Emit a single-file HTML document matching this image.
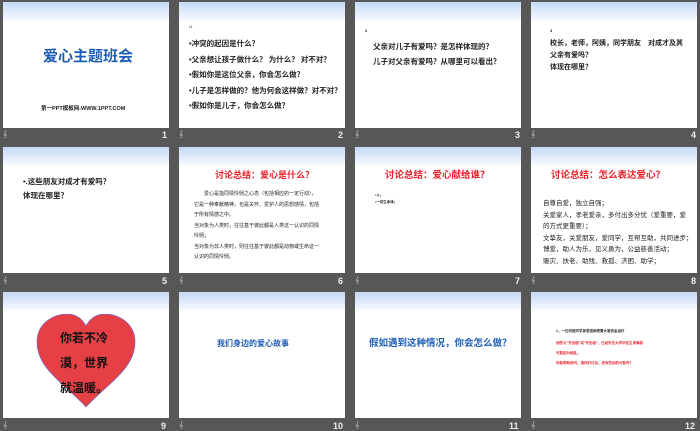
<!DOCTYPE html>
<html><head><meta charset="utf-8"><style>
*{margin:0;padding:0;box-sizing:border-box}
body{width:700px;height:431px;background:#575757;position:relative;overflow:hidden;font-family:"Liberation Sans","Noto Sans CJK SC",sans-serif}
.s{position:absolute;width:166px;height:126px;background:#fff;overflow:hidden}
.s:before{content:"";position:absolute;left:0;top:0;right:0;height:18px;background:linear-gradient(#c5daf5,#f6f9fe)}
.n{position:absolute;color:#eee;font-size:9px;font-weight:bold}
.i{position:absolute;color:#ccc;font-size:7px}
.t{position:absolute;white-space:nowrap;font-weight:bold;color:#222}
.r{color:#e8202a}
.b{color:#1d5db5}
</style></head><body>
<div class="s" style="left:3px;top:2px">
 <div class="t b" style="left:40px;top:43px;font-size:15px">爱心主题班会</div>
 <div class="t" style="left:38px;top:102px;font-size:5.5px">第一PPT模板网-WWW.1PPT.COM</div>
</div>
<div class="s" style="left:179px;top:2px">
 <div class="t" style="left:10px;top:22px;font-size:4px;font-weight:normal">•1</div>
 <div class="t" style="left:10px;top:34px;font-size:7.5px;line-height:15.5px">•冲突的起因是什么？<br>•父亲想让孩子做什么？ 为什么？ 对不对？<br>•假如你是这位父亲，你会怎么做？<br>•儿子是怎样做的？他为何会这样做？对不对？<br>•假如你是儿子，你会怎么做？</div>
</div>
<div class="s" style="left:355px;top:2px">
 <div class="t" style="left:10px;top:26px;font-size:4px">2</div>
 <div class="t" style="left:18px;top:37px;font-size:7.5px;line-height:15px">父亲对儿子有爱吗？是怎样体现的？<br>儿子对父亲有爱吗？从哪里可以看出？</div>
</div>
<div class="s" style="left:531px;top:2px">
 <div class="t" style="left:19px;top:26px;font-size:4px">3</div>
 <div class="t" style="left:19px;top:36px;font-size:7px;line-height:12px">校长，老师，阿姨，同学朋友　对成才及其<br>父亲有爱吗？<br>体现在哪里？</div>
</div>
<div class="s" style="left:3px;top:147px">
 <div class="t" style="left:20px;top:28px;font-size:7.5px;line-height:14px">•.这些朋友对成才有爱吗？<br>体现在哪里？</div>
</div>
<div class="s" style="left:179px;top:147px">
 <div class="t r" style="left:36px;top:21px;font-size:9px">讨论总结：爱心是什么？</div>
 <div class="t" style="left:15px;top:42px;font-size:5px;line-height:10.5px;font-weight:normal">　　爱心是指同情怜悯之心态（包括相应的一定行动），<br>它是一种奉献精神，也是关怀、爱护人的思想感情，包括<br>于所有情感之中。<br>当对象为人类时，往往基于彼此都是人类这一认识的同情<br>怜悯；<br>当对象为非人类时，则往往基于彼此都是动物或生命这一<br>认识的同情怜悯。</div>
</div>
<div class="s" style="left:355px;top:147px">
 <div class="t r" style="left:30px;top:20px;font-size:9.5px">讨论总结：爱心献给谁？</div>
 <div class="t" style="left:20px;top:45px;font-size:3.5px;line-height:7px">•人；<br>•一切生命体；</div>
</div>
<div class="s" style="left:531px;top:147px">
 <div class="t r" style="left:20px;top:20px;font-size:9.5px">讨论总结：怎么表达爱心？</div>
 <div class="t" style="left:12px;top:51px;font-size:6.5px;line-height:11.5px;font-weight:normal">自尊自爱，独立自强；<br>关爱家人，孝老爱亲，多付出多分忧（爱重要，爱<br>的方式更重要）；<br>文挚友，关爱朋友，爱同学，互帮互助，共同进步；<br>博爱，助人为乐，见义勇为，公益慈善活动；<br>赈灾、扶老、助残、救孤、济困、助学；</div>
</div>
<div class="s" style="left:3px;top:292px">
 <svg style="position:absolute;left:32px;top:22px" width="102" height="95" viewBox="0 0 102 95"><path d="M51 93 C30 70 2 55 2 28 C2 8 20 0 32 0 C42 0 48 6 51 12 C54 6 60 0 70 0 C82 0 100 8 100 28 C100 55 72 70 51 93Z" fill="#e54045" stroke="#7a6ac8" stroke-width="0.7"/></svg>
 <div class="t" style="left:57px;top:34px;font-size:12px;line-height:25px;color:#111">你若不冷<br>漠，世界<br>就温暖。</div>
</div>
<div class="s" style="left:179px;top:292px">
 <div class="t b" style="left:38px;top:46px;font-size:8px">我们身边的爱心故事</div>
</div>
<div class="s" style="left:355px;top:292px">
 <div class="t b" style="left:14px;top:43px;font-size:9.5px">假如遇到这种情况，你会怎么做？</div>
</div>
<div class="s" style="left:531px;top:292px">
 <div class="t" style="left:25px;top:37px;font-size:3.5px">1，一位同班同学身患癌病需要大笔资金治疗</div>
 <div class="t r" style="left:25px;top:46px;font-size:3.5px;line-height:10px">他的父"开出租"或"开出租"，已经失去大学毕业生来筹款<br>可能因为困乱。<br>你能帮助他吗，请你们讨论，还有些别的可能吗？</div>
</div>
<div class="i" style="left:3px;top:131px">𝄞</div><div class="n" style="left:162px;top:130px">1</div>
<div class="i" style="left:179px;top:131px">𝄞</div><div class="n" style="left:338px;top:130px">2</div>
<div class="i" style="left:355px;top:131px">𝄞</div><div class="n" style="left:515px;top:130px">3</div>
<div class="i" style="left:531px;top:131px">𝄞</div><div class="n" style="left:691px;top:130px">4</div>
<div class="i" style="left:3px;top:277px">𝄞</div><div class="n" style="left:162px;top:276px">5</div>
<div class="i" style="left:179px;top:277px">𝄞</div><div class="n" style="left:338px;top:276px">6</div>
<div class="i" style="left:355px;top:277px">𝄞</div><div class="n" style="left:515px;top:276px">7</div>
<div class="i" style="left:531px;top:277px">𝄞</div><div class="n" style="left:691px;top:276px">8</div>
<div class="i" style="left:3px;top:422px">𝄞</div><div class="n" style="left:161px;top:421px">9</div>
<div class="i" style="left:179px;top:422px">𝄞</div><div class="n" style="left:333px;top:421px">10</div>
<div class="i" style="left:355px;top:422px">𝄞</div><div class="n" style="left:509px;top:421px">11</div>
<div class="i" style="left:531px;top:422px">𝄞</div><div class="n" style="left:685px;top:421px">12</div>
</body></html>
